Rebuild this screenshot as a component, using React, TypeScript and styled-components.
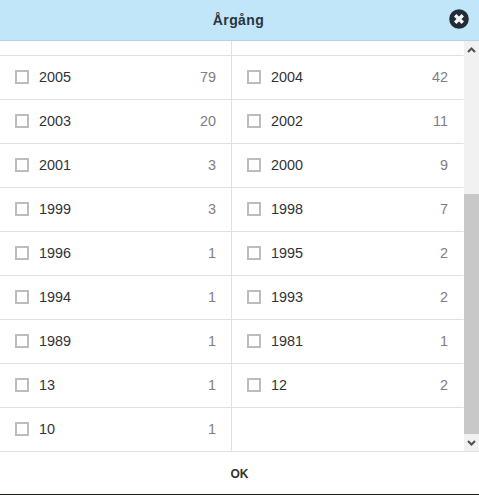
import React from 'react'
import styled, { createGlobalStyle } from 'styled-components'

const GlobalStyle = createGlobalStyle`
  html, body {
    margin: 0;
    padding: 0;
    background: #fff;
  }
  body {
    font-family: "Liberation Sans", Arial, sans-serif;
    overflow: hidden;
  }
`

const Modal = styled.div`
  width: 479px;
  height: 495px;
  display: flex;
  flex-direction: column;
  background: #fff;
  border-bottom: 1px solid #1c1a17;
  box-sizing: border-box;
  position: relative;
`

const Header = styled.div`
  height: 41px;
  flex: none;
  box-sizing: border-box;
  display: flex;
  align-items: center;
  justify-content: center;
  padding-right: 2px;
  background: #c1e6f9;
  border-bottom: 1px solid #b0d4e6;
  font-size: 14px;
  font-weight: 700;
  color: #2a3440;
  letter-spacing: 0.4px;
`

const CloseButton = styled.button`
  position: absolute;
  top: 9px;
  right: 10px;
  width: 20px;
  height: 20px;
  padding: 0;
  border: 0;
  background: none;
  display: block;
`

const Body = styled.div`
  height: 411px;
  flex: none;
  display: flex;
  box-sizing: border-box;
  border-bottom: 1px solid #e0e0e0;
`

const Grid = styled.div`
  width: 464px;
  flex: none;
  display: grid;
  grid-template-columns: 232px 232px;
  grid-template-rows: 15px;
  grid-auto-rows: 44px;
`

const StubCell = styled.div<{ $right?: boolean }>`
  box-sizing: border-box;
  border-bottom: 1px solid #e0e0e0;
  border-right: 1px solid ${p => (p.$right ? 'transparent' : '#e0e0e0')};
`

const Row = styled.div<{ $last?: boolean; $right?: boolean }>`
  display: flex;
  align-items: center;
  box-sizing: border-box;
  padding: 0 15px 2px;
  border-bottom: 1px solid ${p => (p.$last ? 'transparent' : '#e0e0e0')};
  border-right: 1px solid ${p => (p.$right ? 'transparent' : '#e0e0e0')};
`

const Box = styled.span`
  width: 14px;
  height: 14px;
  flex: none;
  box-sizing: border-box;
  border: 2px solid #bdbdbd;
  background: #fff;
  margin-right: 10px;
`

const Year = styled.span`
  font-size: 14.4px;
  color: #333;
  flex: 1;
`

const Count = styled.span`
  font-size: 14.4px;
  color: #808080;
`

const Scrollbar = styled.div`
  width: 15px;
  flex: none;
  background: #f1f1f1;
  display: flex;
  flex-direction: column;
`

const Arrow = styled.div`
  height: 17px;
  flex: none;
  display: flex;
  align-items: center;
  justify-content: center;
`

const Track = styled.div`
  flex: 1;
  display: flex;
  flex-direction: column;
  justify-content: flex-end;
`

const Thumb = styled.div`
  height: 240px;
  background: #c8c8c8;
`

const Footer = styled.div`
  flex: 1;
  display: flex;
  align-items: center;
  justify-content: center;
  padding-top: 2px;
  font-size: 12px;
  font-weight: 700;
  color: #333;
`

const rows: [string, number, string, number][] = [
  ['2005', 79, '2004', 42],
  ['2003', 20, '2002', 11],
  ['2001', 3, '2000', 9],
  ['1999', 3, '1998', 7],
  ['1996', 1, '1995', 2],
  ['1994', 1, '1993', 2],
  ['1989', 1, '1981', 1],
  ['13', 1, '12', 2],
]

const App = () => (
  <>
    <GlobalStyle />
    <Modal>
      <Header>Årgång</Header>
      <CloseButton aria-label="Stäng">
        <svg width="20" height="20" viewBox="0 0 20 20">
          <circle cx="10" cy="10" r="9.8" fill="#232b36" />
          <path d="M6.2 6.2 13.8 13.8 M13.8 6.2 6.2 13.8" stroke="#f4f8fb" strokeWidth="3.4" />
        </svg>
      </CloseButton>
      <Body>
        <Grid>
          <StubCell />
          <StubCell $right />
          {rows.map(r => (
            <React.Fragment key={r[0]}>
              <Row>
                <Box />
                <Year>{r[0]}</Year>
                <Count>{r[1]}</Count>
              </Row>
              <Row $right>
                <Box />
                <Year>{r[2]}</Year>
                <Count>{r[3]}</Count>
              </Row>
            </React.Fragment>
          ))}
          <Row $last>
            <Box />
            <Year>10</Year>
            <Count>1</Count>
          </Row>
        </Grid>
        <Scrollbar>
          <Arrow>
            <svg width="9" height="6" viewBox="0 0 9 6">
              <path d="M1 5 4.5 1.5 8 5" fill="none" stroke="#505050" strokeWidth="2" />
            </svg>
          </Arrow>
          <Track>
            <Thumb />
          </Track>
          <Arrow>
            <svg width="9" height="6" viewBox="0 0 9 6">
              <path d="M1 1 4.5 4.5 8 1" fill="none" stroke="#505050" strokeWidth="2" />
            </svg>
          </Arrow>
        </Scrollbar>
      </Body>
      <Footer>OK</Footer>
    </Modal>
  </>
)

export default App
